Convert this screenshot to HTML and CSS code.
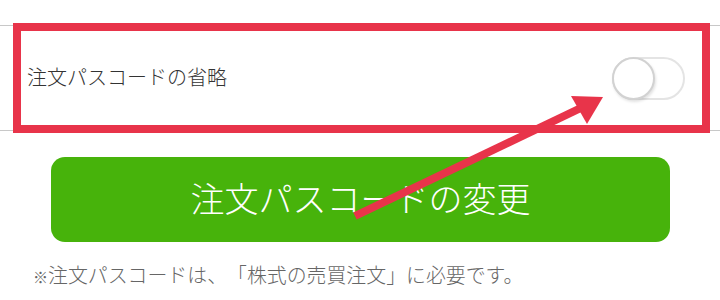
FILE: index.html
```html
<!DOCTYPE html>
<html lang="ja">
<head>
    <meta charset="UTF-8">
    <title>注文パスコード</title>
    <link rel="stylesheet" href="styles.css">
</head>
<body>
    <main class="page">
        <div class="setting-row">
            <span class="setting-label">注文パスコードの省略</span>
            <span class="switch"><span class="switch-knob"></span></span>
        </div>
        <button class="change-btn">注文パスコードの変更</button>
        <p class="note"><span class="note-mark">※</span>注文パスコードは、「株式の売買注文」に必要です。</p>

        <!-- annotation -->
        <div class="mark-box"></div>
        <svg class="mark-arrow" width="720" height="300" viewBox="0 0 720 300">
            <line x1="355" y1="216" x2="585" y2="106" stroke="#e8344a" stroke-width="8"/>
            <polygon points="603,97 571,96 587,124" fill="#e8344a"/>
        </svg>
    </main>
</body>
</html>
```

FILE: styles.css
```css
body {
    margin: 0;
    background: #fff;
    font-family: "Noto Sans CJK JP", "Noto Sans", sans-serif;
    font-weight: 300;
    text-spacing-trim: space-all;
}

.page {
    position: relative;
    width: 720px;
    height: 300px;
    padding-top: 25px;
    box-sizing: border-box;
}

.setting-row {
    display: flex;
    align-items: center;
    justify-content: space-between;
    height: 106px;
    padding: 0 35px 4px 27px;
    box-sizing: border-box;
    border-top: 1px solid #c8c8c8;
    border-bottom: 1px solid #c8c8c8;
}

.setting-label {
    font-size: 20px;
    color: #333;
}

.switch {
    position: relative;
    width: 73px;
    height: 43px;
    border: 2px solid #e4e4e4;
    border-radius: 22px;
    box-sizing: border-box;
    background: #fff;
    margin-top: 4px;
}

.switch-knob {
    position: absolute;
    left: -2px;
    top: -2px;
    width: 43px;
    height: 43px;
    border-radius: 50%;
    border: 2px solid #d2d2d2;
    box-sizing: border-box;
    background: #fff;
    box-shadow: 1px 2px 3px rgba(0, 0, 0, 0.12);
}

.change-btn {
    display: block;
    width: 619px;
    height: 85px;
    margin: 26px 0 0 51px;
    border: none;
    border-radius: 14px;
    background: #47b30b;
    color: #fff;
    font-family: inherit;
    font-weight: 300;
    font-size: 34px;
    padding: 0 0 4px;
}

.note {
    margin: 18px 0 0 33px;
    font-size: 19.9px;
    color: #666;
}

.note-mark {
    font-size: 15px;
}

.mark-box {
    position: absolute;
    left: 13px;
    top: 23px;
    width: 697px;
    height: 110px;
    border: 8px solid #e8344a;
    box-sizing: border-box;
}

.mark-arrow {
    position: absolute;
    left: 0;
    top: 0;
}
```
